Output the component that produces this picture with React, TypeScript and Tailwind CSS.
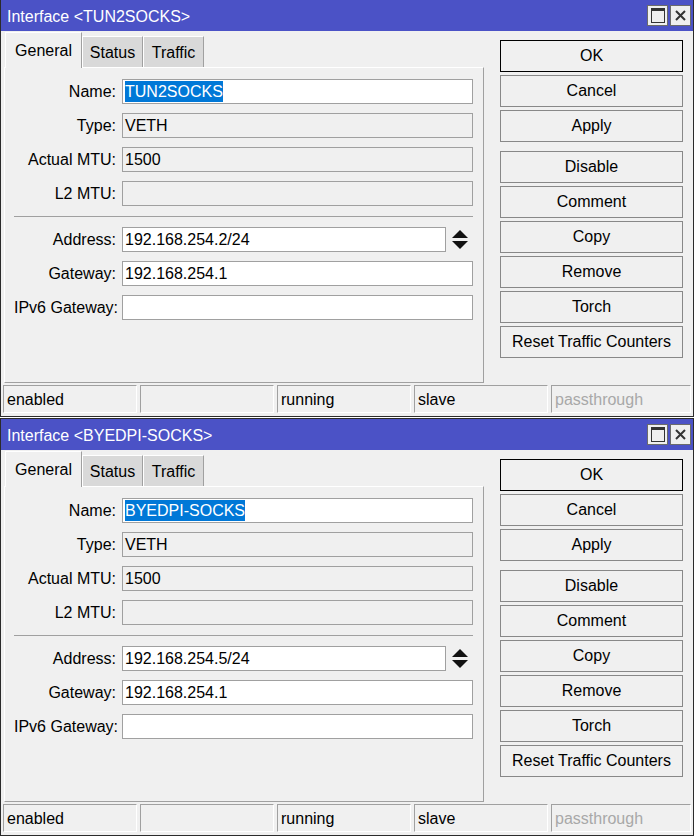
import React from 'react'

type FieldProps = {
  label: string
  value?: string
  readOnly?: boolean
  selected?: boolean
  spinner?: boolean
}

function Field({ label, value = '', readOnly, selected, spinner }: FieldProps) {
  return (
    <div className="flex items-center h-[25px]">
      <div className="w-[102px] text-right whitespace-nowrap">{label}:</div>
      <div
        className={`ml-[6px] h-[25px] border border-[#a0a0a0] flex items-center pl-[2px] whitespace-nowrap ${
          spinner ? 'w-[324px]' : 'w-[351px]'
        } ${readOnly ? 'bg-[#f0f0f0]' : 'bg-white'}`}
      >
        {selected ? (
          <span className="inline-block h-[21px] leading-[21px] bg-[#0078d7] text-white">{value}</span>
        ) : (
          <span>{value}</span>
        )}
      </div>
      {spinner && (
        <svg className="ml-[6px]" width="16" height="19" viewBox="0 0 16 19">
          <path d="M8 0 L16 8 H0 Z" fill="#111" />
          <path d="M0 11 H16 L8 19 Z" fill="#111" />
        </svg>
      )}
    </div>
  )
}

const actions = ['OK', 'Cancel', 'Apply', 'Disable', 'Comment', 'Copy', 'Remove', 'Torch', 'Reset Traffic Counters']

function InterfaceWindow({ name, address, first }: { name: string; address: string; first?: boolean }) {
  return (
    <div
      className={`w-[694px] bg-[#f0f0f0] border-x border-b border-[#2b2b2b] ${first ? '' : 'border-t mt-[1px]'}`}
    >
      {/* Title bar */}
      <div className="h-[31px] bg-[#4b52c6] flex items-center justify-between pl-[6px] pr-[2px]">
        <span className="text-white pt-[2px]">Interface &lt;{name}&gt;</span>
        <div className="flex gap-[2px]">
          <div className="w-[21px] h-[21px] border border-[#6b6b6b] bg-[#efefef] flex items-center justify-center">
            <svg width="14" height="15" viewBox="0 0 14 15">
              <rect x="0.5" y="0.5" width="13" height="14" fill="none" stroke="#333" />
              <rect x="0" y="0" width="14" height="3" fill="#333" />
            </svg>
          </div>
          <div className="w-[21px] h-[21px] border border-[#6b6b6b] bg-[#efefef] flex items-center justify-center">
            <svg width="11" height="11" viewBox="0 0 11 11">
              <path d="M1 1 L10 10 M10 1 L1 10" stroke="#333" strokeWidth="2" />
            </svg>
          </div>
        </div>
      </div>

      {/* Body */}
      <div className="flex flex-col pt-[1px] pb-[3px]">
        <div className="flex pl-[3px]">
          {/* Tabs + panel */}
          <div className="w-[480px] flex flex-col">
            <div className="flex items-start pl-[1px]">
              <div className="relative z-10 -mb-px h-[36px] w-[77px] bg-[#f0f0f0] border-t border-l border-white border-r border-r-[#a0a0a0] flex items-center justify-center">
                General
              </div>
              <div className="mt-[4px] h-[31px] w-[61px] bg-[#d9d9d9] border-t border-l border-white border-r border-r-[#a0a0a0] flex items-center justify-center pt-[2px]">
                Status
              </div>
              <div className="mt-[4px] h-[31px] w-[61px] bg-[#d9d9d9] border-t border-l border-white border-r border-r-[#a0a0a0] flex items-center justify-center pt-[2px]">
                Traffic
              </div>
            </div>
            <div className="h-[316px] border border-t-white border-l-white border-r-[#a0a0a0] border-b-[#a0a0a0] pt-[11px] pl-[9px] pr-[10px] flex flex-col">
              <div className="flex flex-col gap-[9px]">
                <Field label="Name" value={name} selected />
                <Field label="Type" value="VETH" readOnly />
                <Field label="Actual MTU" value="1500" readOnly />
                <Field label="L2 MTU" readOnly />
              </div>
              <div className="mt-[10px] h-px bg-[#a0a0a0]" />
              <div className="mt-[10px] flex flex-col gap-[9px]">
                <Field label="Address" value={address} spinner />
                <Field label="Gateway" value="192.168.254.1" />
                <Field label="IPv6 Gateway" />
              </div>
            </div>
          </div>

          {/* Buttons */}
          <div className="ml-[16px] pt-[8px] w-[183px] flex flex-col gap-[3px]">
            {actions.map((a, i) => (
              <div
                key={a}
                className={`h-[32px] flex items-center justify-center border bg-[#f0f0f0] whitespace-nowrap ${
                  i === 0 ? 'border-black' : 'border-[#888888]'
                } ${i === 3 ? 'mt-[6px]' : ''}`}
              >
                {a}
              </div>
            ))}
          </div>
        </div>

        {/* Status bar */}
        <div className="mt-[2px] flex gap-[3px] pl-[2px]">
          {['enabled', '', 'running', 'slave'].map((s, i) => (
            <div
              key={i}
              className="w-[134px] h-[28px] border border-t-[#a0a0a0] border-l-[#a0a0a0] border-r-white border-b-white flex items-center pl-[3px] pt-[2px]"
            >
              {s}
            </div>
          ))}
          <div className="w-[140px] h-[28px] border border-t-[#a0a0a0] border-l-[#a0a0a0] border-r-white border-b-white flex items-center pl-[3px] pt-[2px] text-[#a8a8a8]">
            passthrough
          </div>
        </div>
      </div>
    </div>
  )
}

export default function App() {
  return (
    <div className="w-[696px] h-[836px] overflow-hidden bg-white text-black text-[16px] font-['Liberation_Sans',Arial,sans-serif]">
      <InterfaceWindow name="TUN2SOCKS" address="192.168.254.2/24" first />
      <InterfaceWindow name="BYEDPI-SOCKS" address="192.168.254.5/24" />
    </div>
  )
}
